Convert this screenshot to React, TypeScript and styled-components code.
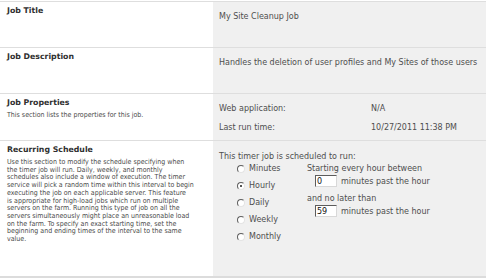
import styled, { createGlobalStyle } from "styled-components"

const GlobalStyle = createGlobalStyle`
  html, body {
    margin: 0;
    padding: 0;
    background: #ffffff;
  }
`

const Page = styled.div`
  width: 486px;
  padding-top: 1px;
  font-family: "DejaVu Sans", Verdana, sans-serif;
  border-bottom: 2px solid #dcdcdc;
`

const Section = styled.div<{ height: number }>`
  display: grid;
  grid-template-columns: 213px 1fr;
  height: ${(props) => props.height}px;
  border-top: 1px solid #dedede;
  box-sizing: border-box;
`

const LabelCell = styled.div`
  padding: 4px 10px 0 7px;
  color: #333333;
`

const Heading = styled.div`
  font-family: "DejaVu Sans", sans-serif;
  font-weight: bold;
  font-size: 7.8px;
  line-height: 9px;
  color: #2f2f2f;
`

const Description = styled.p`
  margin: 5px 0 0;
  font-family: "DejaVu Sans Condensed", "DejaVu Sans", sans-serif;
  font-size: 7px;
  line-height: 7.7px;
  color: #4a4a4a;
  white-space: nowrap;
`

const ValueCell = styled.div<{ top?: number }>`
  background: #f0f0f0;
  padding: ${(props) => props.top ?? 10}px 6px 0 6px;
  font-size: 8px;
  line-height: 9px;
  color: #4e4e4e;
  white-space: nowrap;
`

const PropertyGrid = styled.div`
  display: grid;
  grid-template-columns: 152px 1fr;
  row-gap: 10px;
`

const ScheduleBody = styled.div`
  display: flex;
  padding-left: 18px;
  margin-top: 3px;
`

const RadioList = styled.div`
  display: flex;
  flex-direction: column;
  gap: 8px;
  width: 70px;
`

const RadioRow = styled.div`
  display: flex;
  align-items: center;
  gap: 4px;
`

const Radio = styled.span<{ checked?: boolean }>`
  position: relative;
  width: 6px;
  height: 6px;
  border-radius: 50%;
  background: #ffffff;
  border: 1px solid;
  border-color: #5f5f5f #e4e4e4 #e4e4e4 #5f5f5f;

  &::after {
    content: "";
    display: ${(props) => (props.checked ? "block" : "none")};
    position: absolute;
    left: 2px;
    top: 2px;
    width: 2px;
    height: 2px;
    border-radius: 50%;
    background: #1e1e1e;
  }
`

const Details = styled.div`
  display: flex;
  flex-direction: column;
`

const InputRow = styled.div`
  display: flex;
  align-items: center;
  gap: 4px;
  padding-left: 8px;
  margin: 2px 0 7px;
`

const MinuteBox = styled.input`
  width: 22px;
  height: 12px;
  box-sizing: border-box;
  padding: 0 1px;
  border: 1px solid;
  border-color: #5c5c5c #d8d8d8 #d8d8d8 #5c5c5c;
  background: #ffffff;
  font-family: "DejaVu Sans", sans-serif;
  font-size: 8px;
  color: #111111;
  outline: none;
`

const frequencies = ["Minutes", "Hourly", "Daily", "Weekly", "Monthly"]

const scheduleHelp = [
  "Use this section to modify the schedule specifying when",
  "the timer job will run. Daily, weekly, and monthly",
  "schedules also include a window of execution. The timer",
  "service will pick a random time within this interval to begin",
  "executing the job on each applicable server. This feature",
  "is appropriate for high-load jobs which run on multiple",
  "servers on the farm. Running this type of job on all the",
  "servers simultaneously might place an unreasonable load",
  "on the farm. To specify an exact starting time, set the",
  "beginning and ending times of the interval to the same",
  "value.",
]

export default function App() {
  return (
    <Page>
      <GlobalStyle />
      <Section height={46}>
        <LabelCell>
          <Heading>Job Title</Heading>
        </LabelCell>
        <ValueCell>My Site Cleanup Job</ValueCell>
      </Section>
      <Section height={46}>
        <LabelCell>
          <Heading>Job Description</Heading>
        </LabelCell>
        <ValueCell>Handles the deletion of user profiles and My Sites of those users</ValueCell>
      </Section>
      <Section height={47}>
        <LabelCell>
          <Heading>Job Properties</Heading>
          <Description>This section lists the properties for this job.</Description>
        </LabelCell>
        <ValueCell>
          <PropertyGrid>
            <span>Web application:</span>
            <span>N/A</span>
            <span>Last run time:</span>
            <span>10/27/2011 11:38 PM</span>
          </PropertyGrid>
        </ValueCell>
      </Section>
      <Section height={136}>
        <LabelCell>
          <Heading>Recurring Schedule</Heading>
          <Description>
            {scheduleHelp.map((line, i) => (
              <span key={i}>
                {line}
                {i < scheduleHelp.length - 1 && <br />}
              </span>
            ))}
          </Description>
        </LabelCell>
        <ValueCell top={11}>
          <div>This timer job is scheduled to run:</div>
          <ScheduleBody>
            <RadioList>
              {frequencies.map((f) => (
                <RadioRow key={f}>
                  <Radio checked={f === "Hourly"} />
                  <span>{f}</span>
                </RadioRow>
              ))}
            </RadioList>
            <Details>
              <div>Starting every hour between</div>
              <InputRow>
                <MinuteBox readOnly defaultValue="0" />
                <span>minutes past the hour</span>
              </InputRow>
              <div>and no later than</div>
              <InputRow>
                <MinuteBox readOnly defaultValue="59" />
                <span>minutes past the hour</span>
              </InputRow>
            </Details>
          </ScheduleBody>
        </ValueCell>
      </Section>
    </Page>
  )
}
